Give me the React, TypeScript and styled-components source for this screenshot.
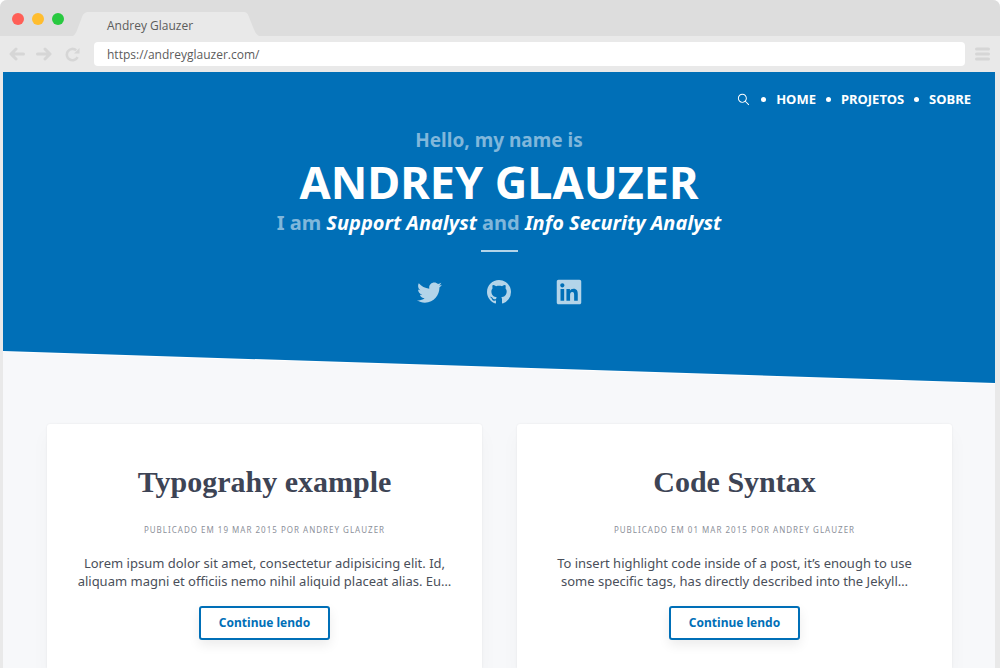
import React from "react";
import styled, { createGlobalStyle } from "styled-components";
import { IoLogoTwitter, IoIosSearch } from "react-icons/io";
import { FaLinkedin } from "react-icons/fa";

const GlobalStyle = createGlobalStyle`
  *, *::before, *::after { box-sizing: border-box; }
  body {
    margin: 0;
    background: #ffffff;
    font-family: "Noto Sans", "Open Sans", sans-serif;
    color: #4a4f5a;
  }
  h1, h2, p { margin: 0; }
`;

const Browser = styled.div`
  min-height: 100vh;
  display: flex;
  flex-direction: column;
  background: #e9e9e9;
  border-radius: 7px 7px 0 0;
  overflow: hidden;
`;

const TabBar = styled.div`
  height: 36px;
  display: flex;
  align-items: flex-end;
  background: #dddddd;
`;

const Lights = styled.div`
  display: flex;
  gap: 8px;
  padding: 0 9px 11px 12px;
`;

const Light = styled.button<{ $color: string }>`
  width: 12px;
  height: 12px;
  padding: 0;
  border: 0;
  border-radius: 50%;
  background: ${({ $color }) => $color};
`;

const Tab = styled.div`
  width: 186px;
  height: 24px;
  padding: 0 34px;
  background: #e9e9e9;
  clip-path: path("M0 24 C3 22 4 18 6 13 L9 5 C10 2 12 0 16 0 L170 0 C174 0 175 2 176 5 L180 15 C182 20 183 22 186 24 Z");
  font-family: "Open Sans", sans-serif;
  font-size: 12px;
  line-height: 28px;
  color: #5c5c5c;
`;

const Toolbar = styled.div`
  height: 36px;
  display: flex;
  align-items: center;
  padding: 0 10px 0 9px;
`;

const ToolButton = styled.button<{ $gap: number }>`
  display: flex;
  margin-right: ${({ $gap }) => $gap}px;
  padding: 0;
  border: 0;
  background: none;
  color: #d6d6d6;
`;

const Address = styled.input`
  flex: 1;
  min-width: 0;
  height: 24px;
  margin-right: 10px;
  padding: 0 13px;
  border: 0;
  border-radius: 4px;
  background: #ffffff;
  font-family: "Open Sans", sans-serif;
  font-size: 12px;
  color: #5c5c5c;
`;

const Page = styled.div`
  flex: 1;
  margin: 0 5px 0 3px;
  background: #f7f8fa;
`;

const HeroEdge = styled.header`
  padding-bottom: 1px;
  background: #ffffff;
  clip-path: polygon(0 0, 100% 0, 100% 100%, 0 calc(100% - 32px));
`;

const Hero = styled.div`
  display: flex;
  flex-direction: column;
  align-items: center;
  padding: 16px 24px 77px;
  background: #006fb7;
  clip-path: polygon(0 0, 100% 0, 100% 100%, 0 calc(100% - 32px));
  color: #80b7db;
`;

const Nav = styled.nav`
  align-self: flex-end;
  display: flex;
  align-items: center;
  gap: 10px;
  height: 22px;
  color: #ffffff;
`;

const NavLink = styled.a`
  display: flex;
  color: #ffffff;
  font-size: 13px;
  font-weight: 700;
  line-height: 22px;
  text-decoration: none;
`;

const Dot = styled.span`
  width: 5px;
  height: 5px;
  border-radius: 50%;
  background: #ffffff;
`;

const Intro = styled.p`
  margin-top: 16px;
  font-size: 19px;
  font-weight: 700;
  line-height: 28px;
`;

const Name = styled.h1`
  font-size: 45px;
  font-weight: 700;
  line-height: 55px;
  color: #ffffff;
`;

const Roles = styled.p`
  font-size: 20px;
  font-weight: 700;
  line-height: 28px;

  em { color: #ffffff; }
`;

const Rule = styled.hr`
  width: 37px;
  height: 2px;
  margin: 13px 0 26px;
  border: 0;
  background: #b3d4e9;
`;

const Social = styled.div`
  display: flex;
  gap: 42px;
`;

const SocialLink = styled.a`
  width: 28px;
  height: 28px;
  display: flex;
  align-items: center;
  justify-content: center;
  color: #b3d4e9;
`;

const Posts = styled.main`
  display: grid;
  grid-template-columns: 1fr 1fr;
  gap: 35px;
  padding: 40px 43px 0 44px;
`;

const Card = styled.article`
  min-height: 244px;
  display: flex;
  flex-direction: column;
  align-items: center;
  padding: 36px 16px 28px;
  border-radius: 3px 3px 0 0;
  background: #ffffff;
  box-shadow: 0 0 2px rgba(0, 0, 0, 0.08), 0 10px 20px rgba(0, 0, 0, 0.03);
  text-align: center;
`;

const Title = styled.h2`
  font-family: "Liberation Serif", serif;
  font-size: 30px;
  font-weight: 700;
  line-height: 44px;
  color: #3d4455;
`;

const Meta = styled.p`
  margin-top: 18px;
  font-size: 8px;
  line-height: 16px;
  letter-spacing: 1px;
  text-transform: uppercase;
  color: #8c909a;
`;

const Excerpt = styled.p`
  margin-top: 16px;
  font-size: 13px;
  line-height: 18px;
`;

const ReadMore = styled.a`
  margin-top: 16px;
  padding: 0 18px;
  border: 2px solid #006fb7;
  border-radius: 3px;
  box-shadow: 0 5px 12px rgba(0, 0, 0, 0.08);
  font-size: 12px;
  font-weight: 700;
  line-height: 30px;
  color: #006fb7;
  text-decoration: none;
`;

const posts = [
  {
    title: "Typograhy example",
    date: "19 Mar 2015",
    lines: [
      "Lorem ipsum dolor sit amet, consectetur adipisicing elit. Id,",
      "aliquam magni et officiis nemo nihil aliquid placeat alias. Eu…",
    ],
  },
  {
    title: "Code Syntax",
    date: "01 Mar 2015",
    lines: [
      "To insert highlight code inside of a post, it’s enough to use",
      "some specific tags, has directly described into the Jekyll…",
    ],
  },
];

export default function App() {
  return (
    <Browser>
      <GlobalStyle />
      <TabBar>
        <Lights>
          <Light $color="#ff5f57" aria-label="Close" />
          <Light $color="#ffbd2e" aria-label="Minimize" />
          <Light $color="#28c940" aria-label="Maximize" />
        </Lights>
        <Tab>Andrey Glauzer</Tab>
      </TabBar>
      <Toolbar>
        <ToolButton $gap={11} aria-label="Back">
          <svg width="16" height="14" viewBox="0 0 16 14" fill="none" stroke="currentColor" strokeWidth="3" strokeLinecap="round" strokeLinejoin="round">
            <path d="M14.5 7H3M7 2L2 7l5 5" />
          </svg>
        </ToolButton>
        <ToolButton $gap={13} aria-label="Forward">
          <svg width="16" height="14" viewBox="0 0 16 14" fill="none" stroke="currentColor" strokeWidth="3" strokeLinecap="round" strokeLinejoin="round">
            <path d="M1.5 7H13M9 2l5 5-5 5" />
          </svg>
        </ToolButton>
        <ToolButton $gap={14} aria-label="Reload">
          <svg width="15" height="15" viewBox="0 0 15 15" fill="none" stroke="currentColor" strokeWidth="2.6">
            <path d="M12.6 10.2A5.7 5.7 0 1 1 11.2 3.2" />
            <path d="M14.5 1v5.6H9z" fill="currentColor" stroke="none" />
          </svg>
        </ToolButton>
        <Address aria-label="Address" defaultValue="https://andreyglauzer.com/" />
        <ToolButton $gap={0} aria-label="Menu">
          <svg width="15" height="14" viewBox="0 0 15 14" stroke="currentColor" strokeWidth="3" strokeLinecap="round">
            <path d="M1.5 2h12M1.5 7h12M1.5 12h12" />
          </svg>
        </ToolButton>
      </Toolbar>
      <Page>
        <HeroEdge>
          <Hero>
            <Nav>
              <NavLink href="#search" aria-label="Search"><IoIosSearch size={15} /></NavLink>
              <Dot />
              <NavLink href="#home">HOME</NavLink>
              <Dot />
              <NavLink href="#projetos">PROJETOS</NavLink>
              <Dot />
              <NavLink href="#sobre">SOBRE</NavLink>
            </Nav>
            <Intro>Hello, my name is</Intro>
            <Name>ANDREY GLAUZER</Name>
            <Roles>I am <em>Support Analyst</em> and <em>Info Security Analyst</em></Roles>
            <Rule />
            <Social>
              <SocialLink href="#twitter" aria-label="Twitter"><IoLogoTwitter size={27} /></SocialLink>
              <SocialLink href="#github" aria-label="GitHub">
                <svg width="24" height="24" viewBox="0 0 16 16" fill="currentColor">
                  <path d="M8 0C3.58 0 0 3.58 0 8c0 3.54 2.29 6.53 5.47 7.59.4.07.55-.17.55-.38 0-.19-.01-.82-.01-1.49-2.01.37-2.53-.49-2.69-.94-.09-.23-.48-.94-.82-1.13-.28-.15-.68-.52-.01-.53.63-.01 1.08.58 1.23.82.72 1.21 1.87.87 2.33.66.07-.52.28-.87.51-1.07-1.78-.2-3.64-.89-3.64-3.95 0-.87.31-1.59.82-2.15-.08-.2-.36-1.02.08-2.12 0 0 .67-.21 2.2.82.64-.18 1.32-.27 2-.27s1.36.09 2 .27c1.53-1.04 2.2-.82 2.2-.82.44 1.1.16 1.92.08 2.12.51.56.82 1.27.82 2.15 0 3.07-1.87 3.75-3.65 3.95.29.25.54.73.54 1.48 0 1.07-.01 1.93-.01 2.2 0 .21.15.46.55.38A8.01 8.01 0 0 0 16 8c0-4.42-3.58-8-8-8z" />
                </svg>
              </SocialLink>
              <SocialLink href="#linkedin" aria-label="LinkedIn"><FaLinkedin size={28} /></SocialLink>
            </Social>
          </Hero>
        </HeroEdge>
        <Posts>
          {posts.map((post) => (
            <Card key={post.title}>
              <Title>{post.title}</Title>
              <Meta>Publicado em {post.date} por Andrey Glauzer</Meta>
              <Excerpt>{post.lines[0]}<br />{post.lines[1]}</Excerpt>
              <ReadMore href="#post">Continue lendo</ReadMore>
            </Card>
          ))}
        </Posts>
      </Page>
    </Browser>
  );
}
